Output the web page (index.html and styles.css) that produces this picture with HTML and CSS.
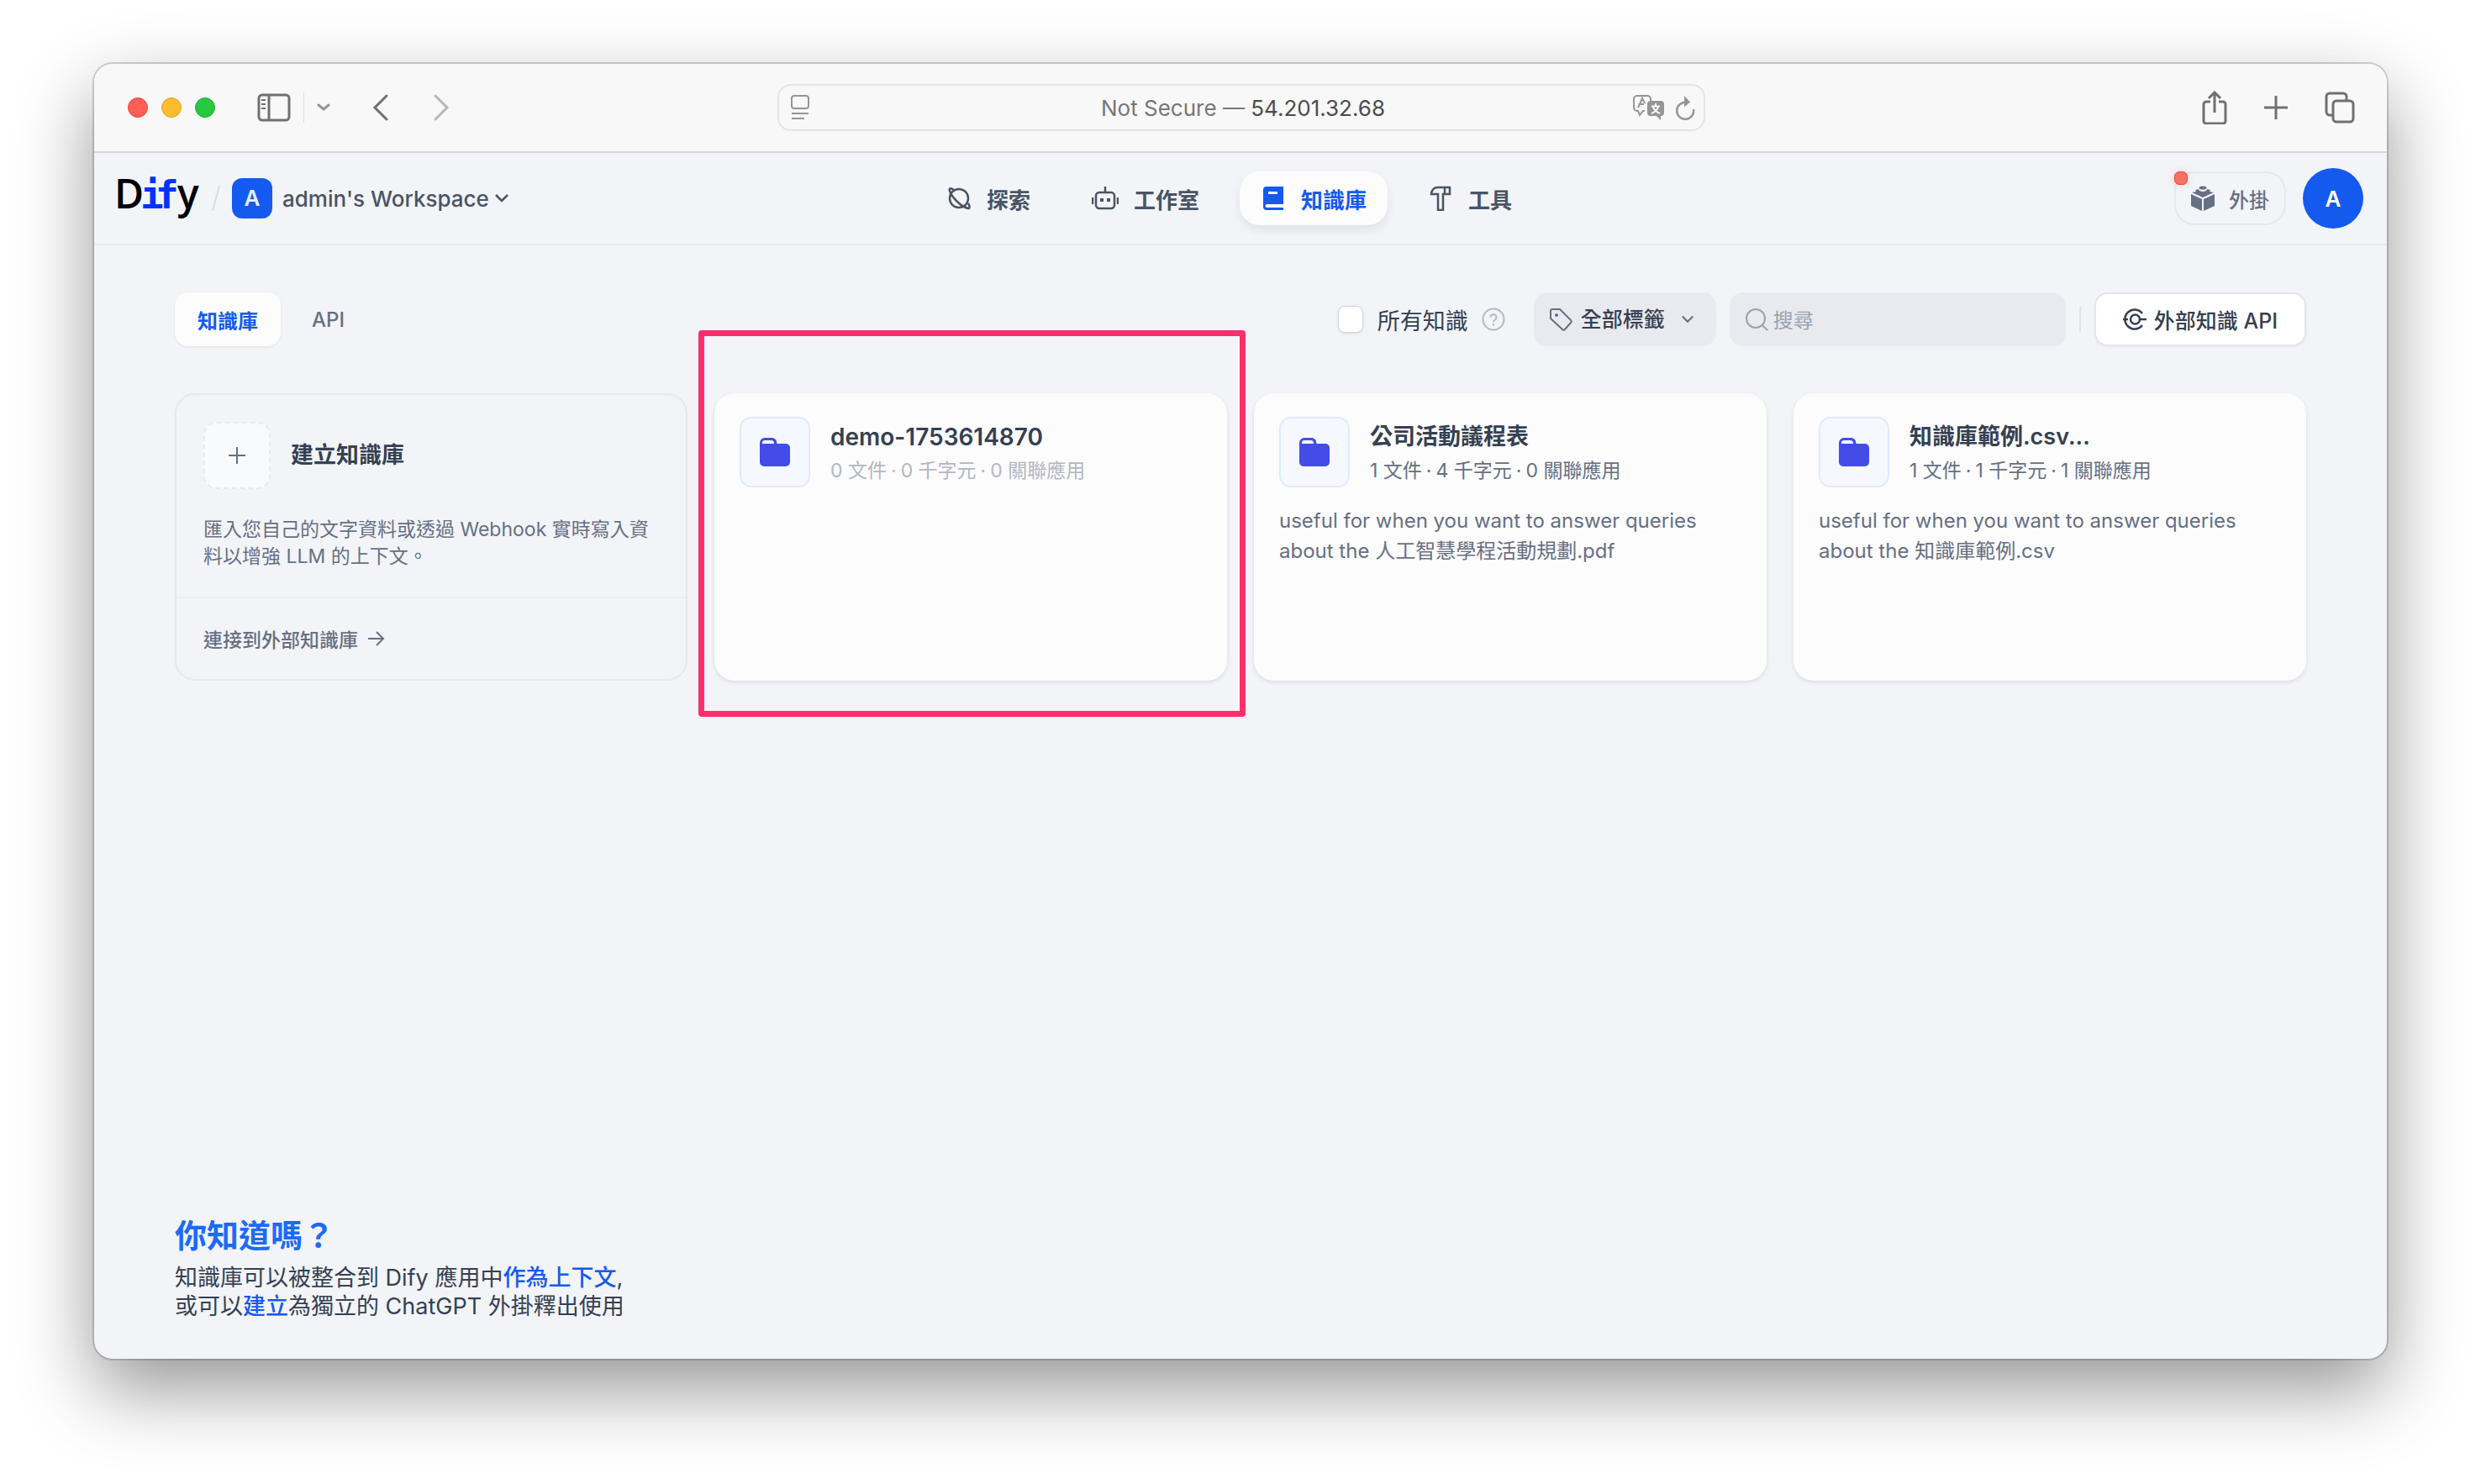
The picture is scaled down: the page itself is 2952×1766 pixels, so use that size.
FILE: index.html
```html
<!DOCTYPE html>
<html lang="zh-Hant-TW">
<head>
<meta charset="utf-8">
<title>知識庫 - Dify</title>
<meta name="viewport" content="width=device-width, initial-scale=1">
<link rel="stylesheet" href="styles.css">
</head>
<body>
<svg class="sprite" aria-hidden="true">
  <symbol id="folder" viewBox="0 0 36 34">
    <path d="M6 0h8c4 0 6 2 6.500 7H31a5 5 0 0 1 5 5v17a5 5 0 0 1-5 5H5a5 5 0 0 1-5-5V6a6 6 0 0 1 6-6zM6 3a3 3 0 0 0-3 4h14c0-3-1-4-4-4z" fill-rule="evenodd" fill="currentColor"/>
  </symbol>
  <symbol id="chevron" viewBox="0 0 18 12">
    <path d="M2 2l7 7 7-7" fill="none" stroke="currentColor" stroke-width="2.500"/>
  </symbol>
</svg>
<div class="window">
  <div class="titlebar">
    <div class="titlebar-left">
      <div class="lights">
        <button class="light light-close" aria-label="Close"></button>
        <button class="light light-min" aria-label="Minimize"></button>
        <button class="light light-max" aria-label="Zoom"></button>
      </div>
      <div class="sidebar-tools">
        <button class="icon-btn" aria-label="Sidebar"><svg width="40" height="34" viewBox="0 0 40 34" fill="none" stroke="currentColor" stroke-width="3"><rect x="2" y="2" width="36" height="30" rx="4"/><path d="M14 2v30"/><path d="M5 8h5M5 13h5M5 18h5" stroke-width="2"/></svg></button>
        <span class="titlebar-rule"></span>
        <button class="icon-btn faint" aria-label="Tab groups"><svg width="16" height="12" viewBox="0 0 16 12" fill="none" stroke="currentColor" stroke-width="3" stroke-linecap="round"><path d="M2 3l6 5 6-5"/></svg></button>
      </div>
      <div class="history">
        <button class="icon-btn" aria-label="Back"><svg width="20" height="34" viewBox="0 0 20 34" fill="none" stroke="currentColor" stroke-width="3" stroke-linecap="round"><path d="M17 3L3 17l14 14"/></svg></button>
        <button class="icon-btn disabled" aria-label="Forward"><svg width="20" height="34" viewBox="0 0 20 34" fill="none" stroke="currentColor" stroke-width="3" stroke-linecap="round"><path d="M3 3l14 14L3 31"/></svg></button>
      </div>
    </div>
    <div class="address">
      <button class="icon-btn faint" aria-label="Page menu"><svg width="22" height="30" viewBox="0 0 22 30" fill="none" stroke="currentColor" stroke-width="2"><rect x="1" y="1" width="20" height="15" rx="3"/><path d="M1 22h20M1 28h15"/></svg></button>
      <button class="address-text"><span class="address-note">Not Secure —</span> 54.201.32.68</button>
      <div class="address-tools">
        <button class="icon-btn faint" aria-label="Translate"><svg width="38" height="30" viewBox="0 0 38 30" fill="none" stroke="currentColor" stroke-width="2"><path d="M14 19h-2l-4 5-2-5H5a4 4 0 0 1-4-4V5a4 4 0 0 1 4-4h12a4 4 0 0 1 4 4v2"/><path d="M6 15l5-11 3 6M8 11h5"/><path d="M21 7h12a4 4 0 0 1 4 4v10a4 4 0 0 1-4 4v5l-5-5h-7a4 4 0 0 1-4-4V11a4 4 0 0 1 4-4z" fill="currentColor" stroke="none"/><path d="M27 10v3M22 13.500h10M30 14c-1 4-3 6-8 8M24 14c1 4 3 6 8 8" stroke="#f8f8f8"/></svg></button>
        <button class="icon-btn faint" aria-label="Reload"><svg width="24" height="32" viewBox="0 0 24 32" fill="none" stroke="currentColor" stroke-width="2.500"><path d="M14 10a10 10 0 1 0 8 8"/><path d="M11 2l7 7.500-7 6z" fill="currentColor" stroke="none"/></svg></button>
      </div>
    </div>
    <div class="titlebar-right">
      <button class="icon-btn" aria-label="Share"><svg width="30" height="40" viewBox="0 0 30 40" fill="none" stroke="currentColor" stroke-width="3"><path d="M10 13H5a3 3 0 0 0-3 3v20a3 3 0 0 0 3 3h20a3 3 0 0 0 3-3V16a3 3 0 0 0-3-3h-5M15 26V3M8 9l7-7 7 7"/></svg></button>
      <button class="icon-btn" aria-label="New tab"><svg width="28" height="30" viewBox="0 0 28 30" fill="none" stroke="currentColor" stroke-width="3"><path d="M14 1v28M0 15h28"/></svg></button>
      <button class="icon-btn" aria-label="Tab overview"><svg width="36" height="38" viewBox="0 0 36 38" fill="none" stroke="currentColor" stroke-width="3"><rect x="10" y="11" width="24" height="25" rx="4"/><path d="M10 28H6a4 4 0 0 1-4-4V6a4 4 0 0 1 4-4h16a4 4 0 0 1 4 4v5"/></svg></button>
    </div>
  </div>

  <header class="header">
    <div class="header-left">
      <a href="#" class="logo" aria-label="Dify"><svg width="102" height="76" viewBox="0 0 102 76"><text class="logo-sans" x="0" y="50">D</text><text class="logo-mono" x="31" y="50">i</text><text class="logo-mono" x="49" y="50">f</text><text class="logo-sans" x="75" y="50">y</text></svg></a>
      <svg class="slash" width="10" height="32" viewBox="0 0 10 32" fill="none" stroke="currentColor" stroke-width="2"><path d="M9 1L1 31"/></svg>
      <button class="workspace"><span class="workspace-badge">A</span><span>admin's Workspace</span><svg width="18" height="12"><use href="#chevron"/></svg></button>
    </div>
    <nav class="nav">
      <a href="#" class="nav-item"><svg width="30" height="30" viewBox="0 0 30 30" fill="none" stroke="currentColor" stroke-width="2.500"><circle cx="15" cy="15" r="11"/><path d="M9 5C5 2 3 3 4 6c1 5 5 9 9 13s9 7 13 8c2 0 2-3 0-6"/></svg>探索</a>
      <a href="#" class="nav-item"><svg width="32" height="30" viewBox="0 0 32 30" fill="none" stroke="currentColor" stroke-width="2.500"><rect x="5" y="8" width="22" height="19" rx="4"/><path d="M16 8V1M1 14v8M31 14v8"/><path d="M10 17h4M18 17h4" stroke-width="4"/></svg>工作室</a>
      <a href="#" class="nav-item active" aria-current="page"><svg width="30" height="30" viewBox="0 0 30 30" fill="currentColor"><path d="M7 1h20v21H7.500a2 2 0 0 0 0 4H27v3H7a4 4 0 0 1-4-4V5a4 4 0 0 1 4-4zM9 7v3h11V7z" fill-rule="evenodd"/></svg>知識庫</a>
      <a href="#" class="nav-item"><svg width="30" height="30" viewBox="0 0 30 30" fill="none" stroke="currentColor" stroke-width="2.500"><path d="M11 2h15v8h-8v19h-6V10H4c0-4 3-8 7-8zM20 2v8"/></svg>工具</a>
    </nav>
    <div class="header-right">
      <button class="plugins"><svg width="28" height="30" viewBox="0 0 28 30" fill="currentColor"><ellipse cx="14" cy="2.500" rx="4.500" ry="2"/><path d="M5 5l4-1c0 4 10 4 10 0l4 1-1 2 5 1-13 6L1 8l5-1zM0 10l13 6v14L0 24zM28 10l-13 6v14l13-6z"/></svg>外掛<span class="dot"></span></button>
      <button class="avatar">A</button>
    </div>
  </header>

  <main class="main">
    <div class="toolbar">
      <div class="tabs">
        <button class="tab selected">知識庫</button>
        <button class="tab">API</button>
      </div>
      <div class="filters">
        <label class="check"><input type="checkbox">所有知識</label>
        <button class="icon-btn help" aria-label="說明"><svg width="28" height="28" viewBox="0 0 28 28" fill="none" stroke="currentColor" stroke-width="2"><circle cx="14" cy="14" r="12.500"/><path d="M10.500 11.500a3.500 3.500 0 1 1 5.500 3c-1.500 1-2 1.500-2 3M14 19v2.500"/></svg></button>
        <label class="tag-select">
          <svg width="28" height="28" viewBox="0 0 28 28" fill="none" stroke="currentColor" stroke-width="2" stroke-linejoin="round"><path d="M2 4a2 2 0 0 1 2-2h9l13 13a2 2 0 0 1 0 3l-7 8a2 2 0 0 1-3 0L2 13z"/><circle cx="9" cy="9" r="1"/></svg>
          <select aria-label="標籤"><option>全部標籤</option></select>
          <svg width="16" height="12"><use href="#chevron"/></svg>
        </label>
        <label class="search">
          <svg width="28" height="28" viewBox="0 0 28 28" fill="none" stroke="currentColor" stroke-width="2"><circle cx="13" cy="13" r="11"/><path d="M21 21l6 6"/></svg>
          <input type="text" placeholder="搜尋" aria-label="搜尋">
        </label>
        <span class="rule"></span>
        <button class="api-btn"><svg width="28" height="26" viewBox="0 0 28 26" fill="none" stroke="currentColor" stroke-width="2.500"><path d="M23 6a11.500 11.500 0 1 0 0 14"/><circle cx="14.500" cy="13" r="5.500"/><path d="M20 13h8M0 13h6"/></svg>外部知識 API</button>
      </div>
    </div>

    <section class="cards">
      <article class="card create">
        <div class="create-body">
          <a href="#" class="create-head">
            <span class="plus"><svg width="20" height="20" viewBox="0 0 20 20" stroke="currentColor" stroke-width="2"><path d="M10 0v20M0 10h20"/></svg></span>
            <span class="card-title">建立知識庫</span>
          </a>
          <p class="create-text">匯入您自己的文字資料或透過 Webhook 實時寫入資料以增強 LLM 的上下文。</p>
        </div>
        <a href="#" class="connect">連接到外部知識庫<svg width="20" height="20" viewBox="0 0 20 20" fill="none" stroke="currentColor" stroke-width="2"><path d="M0 10h18M10 2l8 8-8 8"/></svg></a>
      </article>
      <article class="card dataset empty">
        <div class="card-head">
          <span class="folder"><svg width="36" height="34"><use href="#folder"/></svg></span>
          <div>
            <h2 class="card-title latin">demo-1753614870</h2>
            <p class="meta"><span>0 文件</span><span>·</span><span>0 千字元</span><span>·</span><span>0 關聯應用</span></p>
          </div>
        </div>
        <div class="highlight"></div>
      </article>
      <article class="card dataset">
        <div class="card-head">
          <span class="folder"><svg width="36" height="34"><use href="#folder"/></svg></span>
          <div>
            <h2 class="card-title">公司活動議程表</h2>
            <p class="meta"><span>1 文件</span><span>·</span><span>4 千字元</span><span>·</span><span>0 關聯應用</span></p>
          </div>
        </div>
        <p class="desc">useful for when you want to answer queries about the 人工智慧學程活動規劃.pdf</p>
      </article>
      <article class="card dataset">
        <div class="card-head">
          <span class="folder"><svg width="36" height="34"><use href="#folder"/></svg></span>
          <div>
            <h2 class="card-title">知識庫範例.csv...</h2>
            <p class="meta"><span>1 文件</span><span>·</span><span>1 千字元</span><span>·</span><span>1 關聯應用</span></p>
          </div>
        </div>
        <p class="desc">useful for when you want to answer queries about the 知識庫範例.csv</p>
      </article>
    </section>

    <footer class="tips">
      <h3>你知道嗎？</h3>
      <p>知識庫可以被整合到 Dify 應用中<a href="#">作為上下文</a>,<br>或可以<a href="#">建立</a>為獨立的 ChatGPT 外掛釋出使用</p>
    </footer>
  </main>
</div>
</body>
</html>
```
FILE: styles.css
```css
* { box-sizing: border-box; }

body {
  margin: 0;
  min-height: 100vh;
  padding: 76px 112px 149px;
  display: flex;
  background: #fff;
  color: #354052;
  font-family: Inter, "Noto Sans CJK TC", sans-serif;
  font-size: 26px;
  text-spacing-trim: space-all;
}

h2, h3, p { margin: 0; }
a { color: inherit; text-decoration: none; }
svg { display: block; flex: none; }
button, input, select { font: inherit; color: inherit; }
button { border: 0; padding: 0; background: none; }

.sprite { position: absolute; width: 0; height: 0; }

.window {
  flex: 1;
  min-width: 0;
  display: flex;
  flex-direction: column;
  background: #f2f4f8;
  border-radius: 22px;
  box-shadow: 0 0 0 2px rgba(0, 0, 0, .16), 0 36px 90px rgba(0, 0, 0, .42);
}

/* Browser toolbar */
.titlebar {
  display: grid;
  grid-template-columns: 1fr minmax(400px, 1104px) 1fr;
  align-items: center;
  height: 106px;
  padding: 0 38px 0 40px;
  background: #f8f8f8;
  border-bottom: 2px solid #d5d6da;
  border-radius: 22px 22px 0 0;
}
.titlebar-left { display: flex; align-items: center; gap: 50px; }
.lights { display: flex; gap: 16px; }
.light { width: 24px; height: 24px; border-radius: 50%; }
.light-close { background: #ff5f57; border: 1px solid #e2463f; }
.light-min { background: #febc2e; border: 1px solid #e0a028; }
.light-max { background: #28c840; border: 1px solid #1eab31; }
.icon-btn { color: #707070; }
.icon-btn.faint { color: #959595; }
.icon-btn.disabled { color: #b8b8b8; }
.sidebar-tools { display: flex; align-items: center; gap: 15px; }
.titlebar-rule { width: 1px; height: 36px; background: #e0e0e0; }
.history { display: flex; gap: 52px; }
.address {
  display: grid;
  grid-template-columns: 1fr auto 1fr;
  align-items: center;
  height: 56px;
  padding: 0 10px 0 14px;
  border: 2px solid #e4e4e4;
  border-radius: 16px;
}
.address .icon-btn { justify-self: start; }
.address-text { font-size: 26px; color: #4c4c4c; }
.address-note { color: #777; }
.address-tools { display: flex; gap: 12px; justify-self: end; }
.titlebar-right { display: flex; align-items: center; gap: 44px; justify-self: end; }

/* App header */
.header {
  display: grid;
  grid-template-columns: 1fr auto 1fr;
  align-items: center;
  height: 110px;
  padding: 0 28px 0 24px;
  border-bottom: 2px solid #e6e8ed;
  font-weight: 500;
}
.header-left { display: flex; align-items: center; gap: 14px; }
.logo-sans { font: 600 48px "Open Sans", sans-serif; fill: #000; }
.logo-mono { font: 700 46px "DejaVu Sans Mono", monospace; fill: #0033ff; }
.slash { color: #d8dbe1; }
.workspace { display: flex; align-items: center; gap: 6px; color: #495464; font-weight: 500; }
.workspace-badge {
  width: 48px;
  height: 48px;
  margin-right: 6px;
  border-radius: 12px;
  background: #155aef;
  color: #e8effd;
  line-height: 48px;
  font-weight: 600;
}
.nav { display: flex; color: #495464; }
.nav-item {
  display: flex;
  align-items: center;
  gap: 18px;
  height: 64px;
  margin-right: 23px;
  padding: 0 25px;
  border-radius: 24px;
  font-weight: 600;
}
.nav-item.active {
  background: #fcfcfd;
  color: #155aef;
  box-shadow: 0 6px 12px rgba(16, 24, 40, .08);
}
.header-right { display: flex; align-items: center; gap: 20px; justify-self: end; }
.plugins {
  position: relative;
  display: flex;
  align-items: center;
  gap: 17px;
  height: 64px;
  padding: 0 18px;
  border: 2px solid #e6e8ed;
  border-radius: 24px;
  color: #676f83;
  font-size: 24px;
  font-weight: 500;
}
.dot {
  position: absolute;
  top: -2px;
  left: -2px;
  width: 16px;
  height: 16px;
  border: 1px solid #f04438;
  border-radius: 6px;
  background: #f97066;
  box-shadow: 0 0 8px rgba(240, 68, 56, .2);
}
.avatar {
  width: 72px;
  height: 72px;
  border-radius: 50%;
  background: #155aef;
  color: #fff;
  font-weight: 600;
}

/* Knowledge list */
.main {
  flex: 1;
  display: flex;
  flex-direction: column;
  padding: 56px 96px 45px;
}
.toolbar {
  display: flex;
  align-items: center;
  justify-content: space-between;
  margin-bottom: 56px;
  font-size: 25px;
}
.tabs { display: flex; gap: 10px; font-size: 24px; }
.tab { height: 64px; padding: 0 27px; border-radius: 16px; color: #676f83; font-weight: 500; }
.tab.selected {
  background: #fcfcfd;
  color: #155aef;
  font-weight: 700;
  box-shadow: 0 1px 3px rgba(16, 24, 40, .08);
}
.filters { display: flex; align-items: center; gap: 16px; }
.check { display: flex; align-items: center; gap: 17px; font-size: 27px; }
.check input {
  appearance: none;
  width: 30px;
  height: 32px;
  margin: 0;
  border: 1px solid #d0d5dd;
  border-radius: 8px;
  background: #fff;
  box-shadow: 0 1px 3px rgba(16, 24, 40, .1);
}
.help { margin-right: 18px; color: #b4b8c2; }
.tag-select, .search {
  display: flex;
  align-items: center;
  height: 64px;
  border-radius: 16px;
  background: #e8eaef;
}
.tag-select { gap: 10px; padding: 0 26px 0 18px; color: #676f83; }
.tag-select select {
  appearance: none;
  margin-right: 8px;
  padding: 0;
  border: 0;
  background: none;
  color: #354052;
  font-weight: 500;
}
.search { gap: 6px; width: 400px; padding: 0 18px; color: #98a2b2; font-size: 24px; }
.search input { flex: 1; min-width: 0; padding: 2px 0 0; border: 0; background: none; outline: 0; }
.search input::placeholder { color: #98a2b2; opacity: 1; }
.rule { width: 2px; height: 32px; background: #e1e4ea; }
.api-btn {
  display: flex;
  align-items: center;
  gap: 9px;
  height: 64px;
  padding: 0 32px;
  border: 2px solid #e3e5ea;
  border-radius: 16px;
  background: #fff;
  font-weight: 500;
  box-shadow: 0 1px 3px rgba(16, 24, 40, .06);
}

.cards {
  display: grid;
  grid-template-columns: repeat(4, minmax(0, 1fr));
  gap: 32px;
}
.card { min-height: 342px; border-radius: 24px; font-size: 23px; color: #676f83; }
.card-title { font-size: 27px; line-height: 40px; font-weight: 600; color: #354052; }
.card-title.latin { font-size: 28px; }
.create { display: flex; flex-direction: column; border: 2px solid #e6e8ed; }
.create-body { flex: 1; padding: 32px 32px 30px; }
.create-head { display: flex; align-items: center; gap: 24px; }
.plus {
  display: grid;
  place-items: center;
  width: 80px;
  height: 80px;
  border: 2px dashed #e9ebf0;
  border-radius: 16px;
  background: #f9fafb;
}
.create-text { margin-top: 32px; line-height: 32px; }
.connect {
  display: flex;
  align-items: center;
  gap: 12px;
  height: 98px;
  padding: 0 32px;
  border-top: 2px solid #eceef2;
  font-weight: 500;
}
.dataset {
  position: relative;
  padding: 28px 30px;
  background: #fcfcfd;
  box-shadow: 0 2px 5px rgba(16, 24, 40, .1);
}
.card-head { display: flex; align-items: flex-end; gap: 24px; }
.folder {
  display: grid;
  place-items: center;
  width: 84px;
  height: 84px;
  border: 2px solid #e0eaff;
  border-radius: 14px;
  background: #f5f8ff;
  color: #444ce7;
}
.meta { display: flex; gap: 5px; line-height: 40px; }
.empty .meta { color: #b3b7c2; }
.desc { margin-top: 22px; font-size: 24px; line-height: 36px; }
.highlight {
  position: absolute;
  inset: -75px -22px -43px -19px;
  border: 7px solid #ff2d6c;
  border-radius: 4px;
  pointer-events: none;
}

.tips { margin-top: auto; font-size: 27px; line-height: 34px; }
.tips h3 { margin-bottom: 10px; font-size: 38px; line-height: 48px; font-weight: 600; color: #1d6bf5; }
.tips a { color: #155aef; font-weight: 500; }
```
